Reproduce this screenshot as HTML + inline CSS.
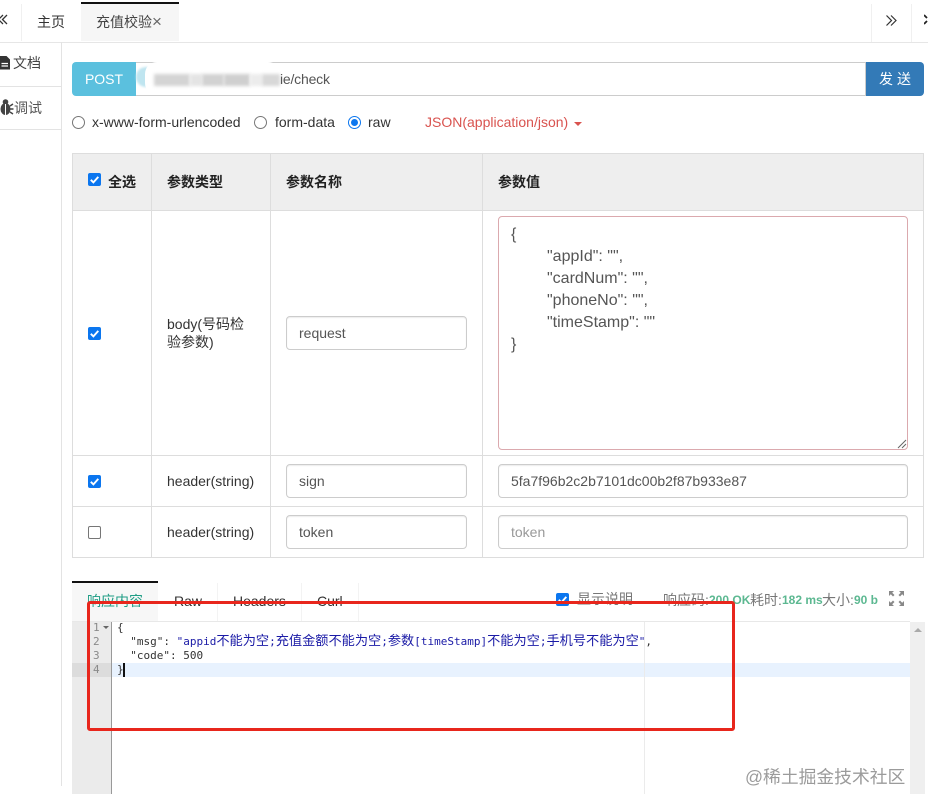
<!DOCTYPE html>
<html lang="zh-CN"><head><meta charset="utf-8">
<style>
html,body{margin:0;padding:0;background:#fff}
body{width:928px;height:809px;position:relative;overflow:hidden;font-family:"Liberation Sans","Noto Sans CJK SC",sans-serif;font-size:14px;color:#333}
.a{position:absolute}
.t{position:absolute;white-space:pre;line-height:20px}
.inp{position:absolute;box-sizing:border-box;border:1px solid #ccc;border-radius:4px;background:#fff;height:34px;box-shadow:inset 0 1px 1px rgba(0,0,0,.075);padding-left:12px;line-height:32px;color:#555;white-space:pre}
.cb{position:absolute;box-sizing:border-box;width:13px;height:13px;border-radius:2px;background:#0b76ef}
.cb svg{position:absolute;left:0;top:0}
.cb.off{background:#fff;border:1px solid #767676}
.rd{position:absolute;box-sizing:border-box;width:13px;height:13px;border-radius:50%;border:1px solid #767676;background:#fff}
.rd.on{border:1.5px solid #0b76ef}
.rd.on:after{content:"";position:absolute;left:1.5px;top:1.5px;width:7px;height:7px;border-radius:50%;background:#0b76ef}
.code{position:absolute;font-family:"DejaVu Sans Mono","Noto Sans CJK SC",monospace;font-size:11px;line-height:14px;height:14px;white-space:pre}
.code i{font-style:normal;font-family:"Noto Sans CJK SC",sans-serif;font-size:13.2px;line-height:0}
.gn{position:absolute;font-family:"DejaVu Sans Mono",monospace;font-size:11px;line-height:14px;color:#8a8a8a}
.ta{position:absolute;white-space:pre;font-size:16px;line-height:22px;color:#555}
.g{position:absolute;white-space:pre;line-height:20px;color:#5cb891;font-weight:bold;font-size:12px}
</style></head><body>

<!-- top tabs -->
<div class="a" style="left:0;top:42px;width:928px;height:1px;background:#e6e6e6"></div>
<div class="a" style="left:21px;top:4px;width:1px;height:37px;background:#f0f0f0"></div>
<div class="a" style="left:871px;top:4px;width:1px;height:38px;background:#f0f0f0"></div>
<div class="a" style="left:911px;top:4px;width:1px;height:38px;background:#f0f0f0"></div>
<svg class="a" style="left:0;top:14px" width="10" height="12" viewBox="0 0 10 12"><path d="M6 1.500 1.500 6 6 10.500" transform="translate(-3 -.5)" fill="none" stroke="#333" stroke-width="1.300"/><path d="M6 1.500 1.500 6 6 10.500" transform="translate(1 -.5)" fill="none" stroke="#333" stroke-width="1.300"/></svg>
<div class="t" style="left:37px;top:12px">主页</div>
<div class="a" style="left:81px;top:4px;width:98px;height:37px;background:#f6f6f6"></div>
<div class="a" style="left:81px;top:2px;width:98px;height:2px;background:#111"></div>
<div class="t" style="left:96px;top:12px;color:#444">充值校验</div>
<div class="t" style="left:152px;top:12px;color:#666;font-size:17px">×</div>
<svg class="a" style="left:885px;top:14px" width="13" height="13" viewBox="0 0 13 13"><path d="M1.500 1.500 6.500 6.500 1.500 11.500M6 1.500 11 6.500 6 11.500" fill="none" stroke="#333" stroke-width="1.200"/></svg>
<svg class="a" style="left:924px;top:14px" width="4" height="11" viewBox="0 0 4 11"><path d="M0 1 3 4 0 1M0 10 3 7" fill="none" stroke="#222" stroke-width="1.800"/></svg>

<!-- side nav -->
<div class="a" style="left:61px;top:42px;width:1px;height:744px;background:#e3e3e3"></div>
<div class="a" style="left:0;top:86px;width:62px;height:1px;background:#e3e3e3"></div>
<div class="a" style="left:0;top:129px;width:62px;height:1px;background:#e3e3e3"></div>
<svg class="a" style="left:0;top:56px" width="11" height="14" viewBox="0 0 11 14"><path d="M0 0H6.500L10 3.500V13.500H0Z" fill="#333"/><path d="M1.500 7.500H8M1.500 10H8" stroke="#fff" stroke-width="1.200"/></svg>
<div class="t" style="left:13px;top:53px;color:#444">文档</div>
<svg class="a" style="left:0;top:99px" width="14" height="17" viewBox="0 0 14 17"><ellipse cx="5.500" cy="10" rx="5" ry="6" fill="#444"/><circle cx="5.500" cy="3" r="2.800" fill="#444"/><path d="M5.500 5V16" stroke="#fff"/><path d="M10 7 13 5M10 10H13.500M10 13 13 15" stroke="#444" stroke-width="1.500"/></svg>
<div class="t" style="left:14px;top:98px;color:#555">调试</div>

<!-- url bar -->
<div class="a" style="left:72px;top:62px;width:64px;height:34px;background:#5bc0de;border-radius:4px 0 0 4px;color:#fff;text-align:center;line-height:34px">POST</div>
<div class="a" style="left:136px;top:62px;width:730px;height:34px;box-sizing:border-box;border:1px solid #ccc;border-left:0;background:#fff"></div>
<div class="a" style="left:136px;top:67px;width:12px;height:20px;background:#bfe5f0;border-radius:10px 0 0 10px;filter:blur(1px)"></div>
<div class="a" style="left:145px;top:62px;width:135px;height:33px;background:#fff;border-radius:12px"></div>
<div class="a" style="left:154px;top:74px;width:36px;height:12px;background:#d4d4d4;filter:blur(1.500px)"></div>
<div class="a" style="left:190px;top:74px;width:12px;height:12px;background:#e4e4e4;filter:blur(1.500px)"></div>
<div class="a" style="left:202px;top:74px;width:22px;height:12px;background:#d2d2d2;filter:blur(1.500px)"></div>
<div class="a" style="left:224px;top:74px;width:26px;height:12px;background:#cfcfcf;filter:blur(1.500px)"></div>
<div class="a" style="left:250px;top:74px;width:12px;height:12px;background:#ececec;filter:blur(1.500px)"></div>
<div class="a" style="left:262px;top:74px;width:18px;height:12px;background:#d8d8d8;filter:blur(1.500px)"></div>
<div class="t" style="left:280px;top:69px;color:#555;width:50px;letter-spacing:-.2px">ie/check</div>
<div class="a" style="left:866px;top:62px;width:58px;height:34px;background:#337ab7;border-radius:0 4px 4px 0;color:#fff;text-align:center;line-height:34px;letter-spacing:4px;font-size:14px;text-indent:4px">发送</div>

<!-- radios -->
<div class="rd" style="left:72px;top:116px"></div>
<div class="t" style="left:92px;top:112px">x-www-form-urlencoded</div>
<div class="rd" style="left:254px;top:116px"></div>
<div class="t" style="left:275px;top:112px">form-data</div>
<div class="rd on" style="left:348px;top:116px"></div>
<div class="t" style="left:368px;top:112px">raw</div>
<div class="t" style="left:425px;top:112px;color:#d9534f">JSON(application/json)</div>
<div class="a" style="left:574px;top:122px;width:0;height:0;border-left:4px solid transparent;border-right:4px solid transparent;border-top:4px solid #d9534f"></div>

<!-- table -->
<div class="a" style="left:72px;top:153px;width:852px;height:58px;background:#eee"></div>
<div class="a" style="left:72px;top:153px;width:852px;height:1px;background:#ddd"></div>
<div class="a" style="left:72px;top:210px;width:852px;height:1px;background:#ddd"></div>
<div class="a" style="left:72px;top:455px;width:852px;height:1px;background:#ddd"></div>
<div class="a" style="left:72px;top:506px;width:852px;height:1px;background:#ddd"></div>
<div class="a" style="left:72px;top:557px;width:852px;height:1px;background:#ddd"></div>
<div class="a" style="left:72px;top:153px;width:1px;height:405px;background:#ddd"></div>
<div class="a" style="left:151px;top:153px;width:1px;height:405px;background:#ddd"></div>
<div class="a" style="left:270px;top:153px;width:1px;height:405px;background:#ddd"></div>
<div class="a" style="left:482px;top:153px;width:1px;height:405px;background:#ddd"></div>
<div class="a" style="left:923px;top:153px;width:1px;height:405px;background:#ddd"></div>

<div class="cb" style="left:88px;top:173px"><svg width="13" height="13" viewBox="0 0 13 13"><path d="M2.800 6.800 5.400 9.400 10.300 3.900" fill="none" stroke="#fff" stroke-width="1.900"/></svg></div>
<div class="t" style="left:108px;top:172px;font-weight:bold;color:#222">全选</div>
<div class="t" style="left:167px;top:172px;font-weight:bold;color:#222">参数类型</div>
<div class="t" style="left:286px;top:172px;font-weight:bold;color:#222">参数名称</div>
<div class="t" style="left:498px;top:172px;font-weight:bold;color:#222">参数值</div>

<div class="cb" style="left:88px;top:327px"><svg width="13" height="13" viewBox="0 0 13 13"><path d="M2.800 6.800 5.400 9.400 10.300 3.900" fill="none" stroke="#fff" stroke-width="1.900"/></svg></div>
<div class="t" style="left:167px;top:314px">body(号码检</div>
<div class="t" style="left:167px;top:332px">验参数)</div>
<div class="inp" style="left:286px;top:316px;width:181px">request</div>

<div class="a" style="left:498px;top:216px;width:410px;height:234px;box-sizing:border-box;border:1px solid #dba9ae;border-radius:4px;background:#fff"></div>
<div class="ta" style="left:511px;top:224px">{</div>
<div class="ta" style="left:547px;top:246px">"appId": "",</div>
<div class="ta" style="left:547px;top:268px">"cardNum": "",</div>
<div class="ta" style="left:547px;top:290px">"phoneNo": "",</div>
<div class="ta" style="left:547px;top:312px">"timeStamp": ""</div>
<div class="ta" style="left:511px;top:334px">}</div>
<svg class="a" style="left:897px;top:439px" width="10" height="10" viewBox="0 0 10 10"><path d="M1 9 9 1M5 9 9 5" stroke="#666" stroke-width="1"/></svg>

<div class="cb" style="left:88px;top:475px"><svg width="13" height="13" viewBox="0 0 13 13"><path d="M2.800 6.800 5.400 9.400 10.300 3.900" fill="none" stroke="#fff" stroke-width="1.900"/></svg></div>
<div class="t" style="left:167px;top:471px">header(string)</div>
<div class="inp" style="left:286px;top:464px;width:181px">sign</div>
<div class="inp" style="left:498px;top:464px;width:410px">5fa7f96b2c2b7101dc00b2f87b933e87</div>

<div class="cb off" style="left:88px;top:526px"></div>
<div class="t" style="left:167px;top:522px">header(string)</div>
<div class="inp" style="left:286px;top:515px;width:181px">token</div>
<div class="inp" style="left:498px;top:515px;width:410px;color:#999">token</div>

<!-- response tabs -->
<div class="a" style="left:72px;top:583px;width:86px;height:38px;background:#f7f7f7"></div>
<div class="a" style="left:72px;top:581px;width:86px;height:2px;background:#111"></div>
<div class="a" style="left:217px;top:583px;width:1px;height:38px;background:#f3f3f3"></div>
<div class="a" style="left:301px;top:583px;width:1px;height:38px;background:#f3f3f3"></div>
<div class="a" style="left:358px;top:583px;width:1px;height:38px;background:#f3f3f3"></div>
<div class="a" style="left:72px;top:621px;width:838px;height:1px;background:#e8e8e8"></div>
<div class="t" style="left:87px;top:591px;color:#1f9d85">响应内容</div>
<div class="t" style="left:174px;top:591px">Raw</div>
<div class="t" style="left:233px;top:591px">Headers</div>
<div class="t" style="left:317px;top:591px">Curl</div>
<div class="cb" style="left:556px;top:593px"><svg width="13" height="13" viewBox="0 0 13 13"><path d="M2.800 6.800 5.400 9.400 10.300 3.900" fill="none" stroke="#fff" stroke-width="1.900"/></svg></div>
<div class="t" style="left:577px;top:589px;color:#777">显示说明</div>
<div class="t" style="left:663px;top:590px;color:#777">响应码:</div>
<div class="g" style="left:709px;top:590px">200 OK</div>
<div class="t" style="left:750px;top:590px;color:#777">耗时:</div>
<div class="g" style="left:782px;top:590px">182 ms</div>
<div class="t" style="left:822px;top:590px;color:#777">大小:</div>
<div class="g" style="left:854px;top:590px">90 b</div>
<svg class="a" style="left:888px;top:590px" width="17" height="17" viewBox="0 0 17 17"><path d="M6 1H1V6L2.800 4.200 5 6.500 6.500 5 4.200 2.800ZM11 1H16V6L14.200 4.200 12 6.500 10.500 5 12.800 2.800ZM6 16H1V11L2.800 12.800 5 10.500 6.500 12 4.200 14.200ZM11 16H16V11L14.200 12.800 12 10.500 10.500 12 12.800 14.200Z" fill="#888"/></svg>

<!-- editor -->
<div class="a" style="left:72px;top:622px;width:39px;height:172px;background:#ebebeb"></div>
<div class="a" style="left:111px;top:622px;width:1px;height:172px;background:#999"></div>
<div class="a" style="left:72px;top:663px;width:39px;height:14px;background:#dcdcdc"></div>
<div class="a" style="left:112px;top:663px;width:798px;height:14px;background:#e8f2fe"></div>
<div class="a" style="left:644px;top:622px;width:1px;height:172px;background:#ebebeb"></div>
<div class="a" style="left:910px;top:622px;width:15px;height:172px;background:#efefef"></div>
<div class="a" style="left:914px;top:628px;width:0;height:0;border-left:4px solid transparent;border-right:4px solid transparent;border-bottom:4px solid #aaa"></div>
<div class="gn" style="left:93px;top:621px">1</div>
<div class="a" style="left:103px;top:626px;width:0;height:0;border-left:3px solid transparent;border-right:3px solid transparent;border-top:3px solid #666"></div>
<div class="gn" style="left:93px;top:635px">2</div>
<div class="gn" style="left:93px;top:649px">3</div>
<div class="gn" style="left:93px;top:663px">4</div>
<div class="code" style="left:117px;top:621px;color:#333">{</div>
<div class="code" style="left:117px;top:635px;color:#333">  "msg": <span style="color:#1a1aa6">"appid<i>不能为空</i>;<i>充值金额不能为空</i>;<i>参数</i>[timeStamp]<i>不能为空</i>;<i>手机号不能为空</i>"</span>,</div>
<div class="code" style="left:117px;top:649px;color:#333">  "code": 500</div>
<div class="code" style="left:117px;top:663px;color:#333">}</div>
<div class="a" style="left:123px;top:663px;width:1.500px;height:14px;background:#111"></div>

<!-- annotation -->
<div class="a" style="left:87px;top:601px;width:648px;height:130px;box-sizing:border-box;border:3px solid #e8261c;border-radius:3px"></div>

<!-- watermark -->
<div class="t" style="left:745px;top:766px;color:#9b9b9b;font-size:17.800px;line-height:22px">@稀土掘金技术社区</div>
</body></html>
